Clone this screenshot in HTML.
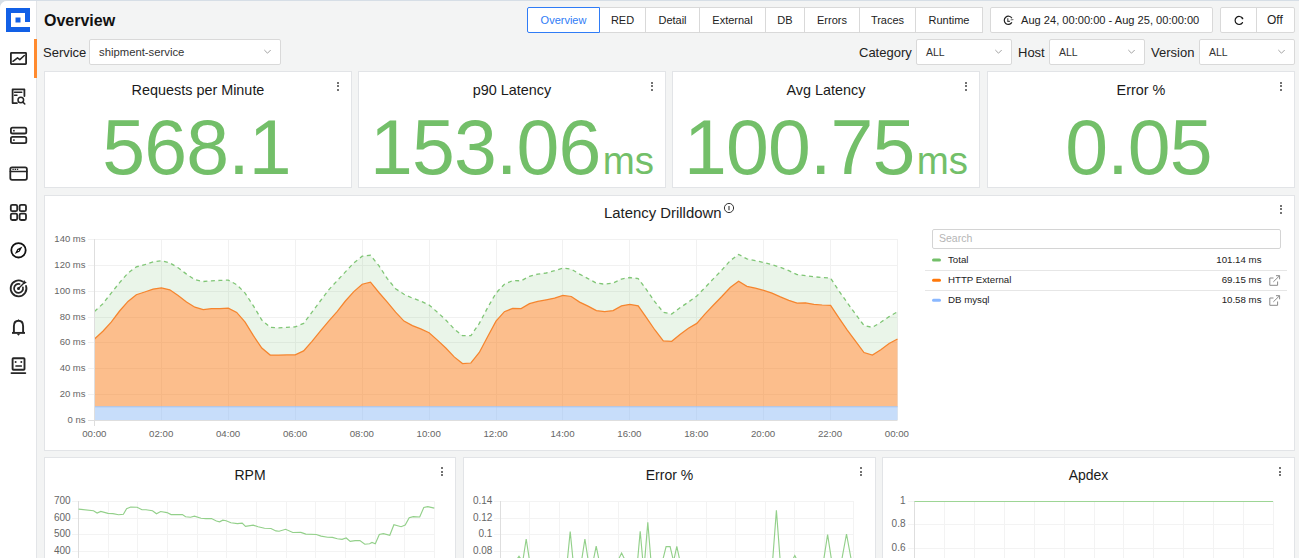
<!DOCTYPE html>
<html><head><meta charset="utf-8">
<style>
*{box-sizing:border-box;margin:0;padding:0}
html,body{width:1299px;height:558px;overflow:hidden;background:#d6dee6;font-family:"Liberation Sans",sans-serif;color:#1f1f1f}
.abs{position:absolute}
#app{position:absolute;left:0;top:1px;width:1299px;height:600px;background:#f3f4f4;border-top-left-radius:7px;overflow:hidden}
#side{position:absolute;left:0;top:0;width:37px;height:600px;background:#fff;border-right:1px solid #e3e5e8}
.t{position:absolute;white-space:nowrap;line-height:1}
.tabs{position:absolute;left:527px;top:6px;height:26px;display:flex}
.tab{height:26px;border:1px solid #d9d9d9;border-left:none;background:#fff;font-size:11px;display:flex;align-items:center;justify-content:center;color:#222}
.tab.active{border:1px solid #2f7cf6;color:#2f7cf6;border-radius:2px 0 0 2px}
.box{position:absolute;background:#fff;border:1px solid #d9d9d9;border-radius:2px}
.card{position:absolute;background:#fff;border:1px solid #e2e4e7}
.sel{position:absolute;background:#fff;border:1px solid #d9d9d9;border-radius:2px;top:38px;height:26px}
.sel span{position:absolute;left:9px;top:7px;font-size:10.5px;line-height:1;color:#333}
.chev{position:absolute;top:8px;width:7px;height:7px}
.lbl{position:absolute;top:45px;font-size:13px;line-height:1;color:#222}
.ctitle{position:absolute;left:0;width:100%;text-align:center;font-size:14.4px;line-height:1;color:#1a1a1a}
.big{position:absolute;left:0;width:100%;text-align:center;color:#73bf69;white-space:nowrap;line-height:1;letter-spacing:-0.8px}
.big b{font-weight:400;font-size:38.5px;margin-left:2.2px;letter-spacing:0}
.kebab{position:absolute;width:2px;height:9px}
.kebab i{position:absolute;left:0;width:2px;height:2px;background:#444;border-radius:1px}
</style></head><body>
<div id="app">
  <div id="side">
    <svg class="abs" style="left:0;top:0" width="37" height="400" viewBox="0 1 37 400">
      <!-- logo -->
      <path d="M6,8 H30 V22 H25 V13 H11 V27 H30 V32 H6 Z" fill="#1260e6"/>
      <rect x="15.5" y="17.5" width="5" height="5" fill="#1260e6"/>
      <g fill="none" stroke="#262626" stroke-width="1.8" stroke-linejoin="round" stroke-linecap="round">
        <!-- chart icon -->
        <rect x="10.9" y="52.9" width="15.2" height="11.2" rx="0.5"/>
        <path d="M13,61.3 L17.5,57.8 L19.8,59.6 L24.3,55.5" stroke-width="1.5"/>
        <!-- report icon -->
        <path d="M17,103.1 H12.6 V89.4 H24.4 V96"/>
        <path d="M14.5,92.3 H21.8" stroke-width="1.4"/>
        <path d="M14.5,95.2 H17" stroke-width="1.4"/>
        <circle cx="20.8" cy="100" r="2.8" stroke-width="1.5"/>
        <path d="M22.9,102.1 L24.8,104" stroke-width="1.5"/>
        <!-- server icon -->
        <rect x="10.9" y="127.7" width="15.4" height="5.8" rx="1.6"/>
        <rect x="10.9" y="136.9" width="15.4" height="6.2" rx="1.6"/>
        <!-- browser icon -->
        <rect x="10.3" y="167.3" width="16.6" height="12.6" rx="1.8"/>
        <path d="M10.3,171.5 H26.9" stroke-width="1.5"/>
        <!-- grid icon -->
        <rect x="10.8" y="204.8" width="6.4" height="6.4" rx="1.5"/>
        <rect x="19.6" y="204.8" width="6.4" height="6.4" rx="1.5"/>
        <rect x="10.8" y="213.6" width="6.4" height="6.4" rx="1.5"/>
        <rect x="19.6" y="213.6" width="6.4" height="6.4" rx="1.5"/>
        <!-- compass -->
        <circle cx="18.5" cy="250.3" r="7.2" stroke="#111"/>
        <!-- target -->
        <path d="M26.06,285.96 A7.9,7.9 0 1 1 22.5,281.56" stroke-width="1.8"/>
        <path d="M22.93,287.39 A4.5,4.5 0 1 1 19.56,284.02" stroke-width="1.7"/>
        <path d="M18.5,288.4 L24,282.9" stroke-width="1.4"/>
        <!-- bell -->
        <path d="M13.9,332.4 V326.2 C13.9,322.6 15.8,320.7 18.5,320.7 C21.2,320.7 23.1,322.6 23.1,326.2 V332.4" stroke-width="1.9"/>
        <path d="M12,332.9 H25" stroke-width="1.9" stroke-linecap="butt"/>
        <!-- robot -->
        <rect x="12.6" y="358.3" width="11.9" height="11.4" rx="0.8" stroke-width="1.9"/>
        <path d="M11.4,373.1 H25.4" stroke-width="1.7"/>
      </g>
      <g fill="#262626">
        <rect x="13.1" y="129.9" width="1.6" height="1.6"/>
        <rect x="13.1" y="139.3" width="1.6" height="1.6"/>
        <rect x="12.4" y="168.7" width="1.4" height="1.3"/>
        <rect x="14.6" y="168.7" width="1.4" height="1.3"/>
        <rect x="16.8" y="168.7" width="1.4" height="1.3"/>
        <path d="M14.8,254 L17.4,249 L22.4,246.4 L19.8,251.4 Z" fill="#111"/><circle cx="18.5" cy="250.3" r="0.6" fill="#fff"/>
        <path d="M16.7,333.8 H20.2 L18.45,335.7 Z"/>
        <path d="M18.5,319 L19.4,321 H17.6 Z"/>
        <path d="M22.8,282.3 L24.2,279.9 L25,281.6 L26.8,282.2 L24.6,284 Z"/>
        <circle cx="18.5" cy="288.4" r="1.5"/>
        <circle cx="15.6" cy="361.9" r="1"/>
        <circle cx="21.3" cy="361.9" r="1"/>
        <rect x="15.3" y="365.3" width="6.7" height="1.4" rx="0.5"/>
      </g>
    </svg>
  </div>
  <!-- orange indicator -->
  <div class="abs" style="left:34px;top:38px;width:3px;height:39px;background:#ff8a2e"></div>

  <!-- header -->
  <div class="t" style="left:44px;top:11.6px;font-size:16px;font-weight:700;color:#111">Overview</div>

  <div class="tabs">
    <div class="tab active" style="width:73px">Overview</div>
    <div class="tab" style="width:46px">RED</div>
    <div class="tab" style="width:54px">Detail</div>
    <div class="tab" style="width:66px">External</div>
    <div class="tab" style="width:39px">DB</div>
    <div class="tab" style="width:55px">Errors</div>
    <div class="tab" style="width:56px">Traces</div>
    <div class="tab" style="width:67px">Runtime</div>
  </div>

  <div class="box" style="left:990px;top:6px;width:223px;height:26px">
    <svg class="abs" style="left:11px;top:6.3px" width="14" height="14" viewBox="0 0 14 14">
      <path d="M9.9,4.2 A4.1,4.1 0 1 0 9.9,8.4" fill="none" stroke="#222" stroke-width="1.2"/>
      <path d="M5.8,4.2 V7.4 H7.9" fill="none" stroke="#444" stroke-width="1.1"/>
      <path d="M8.6,5.9 L11.4,5.6" stroke="#555" stroke-width="0.9"/>
    </svg>
    <div class="t" style="left:30px;top:6.8px;font-size:11.1px;color:#222">Aug 24, 00:00:00 - Aug 25, 00:00:00</div>
  </div>
  <div class="box" style="left:1220px;top:6px;width:75px;height:26px">
    <div class="abs" style="left:35px;top:0;width:1px;height:24px;background:#d9d9d9"></div>
    <svg class="abs" style="left:12px;top:6px" width="14" height="14" viewBox="0 0 14 14">
      <path d="M9.5,8.6 A4,4 0 1 1 9.4,4.2" fill="none" stroke="#1a1a1a" stroke-width="1.2" stroke-linecap="round"/>
      <circle cx="9.5" cy="4.4" r="0.85" fill="#1a1a1a"/>
    </svg>
    <div class="t" style="left:46px;top:6.4px;font-size:12px;color:#222">Off</div>
  </div>

  <!-- filter row -->
  <div class="lbl" style="left:43px;top:44.5px">Service</div>
  <div class="sel" style="left:89px;width:192px"><span style="font-size:11.3px">shipment-service</span>
    <svg class="chev" style="left:174px" viewBox="0 0 7 7"><path d="M0.3,2 L3.5,5.2 L6.7,2" fill="none" stroke="#999" stroke-width="0.9"/></svg></div>
  <div class="lbl" style="left:859px">Category</div>
  <div class="sel" style="left:916px;width:96px"><span>ALL</span>
    <svg class="chev" style="left:78px" viewBox="0 0 7 7"><path d="M0.3,2 L3.5,5.2 L6.7,2" fill="none" stroke="#999" stroke-width="0.9"/></svg></div>
  <div class="lbl" style="left:1018px">Host</div>
  <div class="sel" style="left:1049px;width:96px"><span>ALL</span>
    <svg class="chev" style="left:78px" viewBox="0 0 7 7"><path d="M0.3,2 L3.5,5.2 L6.7,2" fill="none" stroke="#999" stroke-width="0.9"/></svg></div>
  <div class="lbl" style="left:1151px">Version</div>
  <div class="sel" style="left:1199px;width:96px"><span>ALL</span>
    <svg class="chev" style="left:78px" viewBox="0 0 7 7"><path d="M0.3,2 L3.5,5.2 L6.7,2" fill="none" stroke="#999" stroke-width="0.9"/></svg></div>

  <!-- stat cards -->
  <div class="card" style="left:44px;top:70px;width:308px;height:117px">
    <div class="ctitle" style="top:11px">Requests per Minute</div>
    <div class="kebab" style="left:291.5px;top:9.6px"><i style="top:0"></i><i style="top:3.5px"></i><i style="top:7px"></i></div>
    <div class="big" style="top:37px;font-size:77px;left:-1.5px">568.1</div>
  </div>
  <div class="card" style="left:358px;top:70px;width:308px;height:117px">
    <div class="ctitle" style="top:11px">p90 Latency</div>
    <div class="kebab" style="left:291.5px;top:9.6px"><i style="top:0"></i><i style="top:3.5px"></i><i style="top:7px"></i></div>
    <div class="big" style="top:37px;font-size:77px">153.06<b>ms</b></div>
  </div>
  <div class="card" style="left:672px;top:70px;width:308px;height:117px">
    <div class="ctitle" style="top:11px">Avg Latency</div>
    <div class="kebab" style="left:291.5px;top:9.6px"><i style="top:0"></i><i style="top:3.5px"></i><i style="top:7px"></i></div>
    <div class="big" style="top:37px;font-size:77px">100.75<b>ms</b></div>
  </div>
  <div class="card" style="left:987px;top:70px;width:308px;height:117px">
    <div class="ctitle" style="top:11px">Error %</div>
    <div class="kebab" style="left:291.5px;top:9.6px"><i style="top:0"></i><i style="top:3.5px"></i><i style="top:7px"></i></div>
    <div class="big" style="top:37px;font-size:77px;left:-2.5px">0.05</div>
  </div>

  <!-- latency panel -->
  <div class="card" style="left:44px;top:194px;width:1251px;height:256px">
    <div class="t" style="left:559px;top:10.3px;font-size:14.9px;color:#222">Latency Drilldown</div>
    <svg class="abs" style="left:677.6px;top:5.8px" width="12" height="12" viewBox="0 0 12 12"><circle cx="6" cy="6" r="4.6" fill="none" stroke="#333" stroke-width="1"/><path d="M6,4 V8.2" stroke="#333" stroke-width="1.1"/></svg>
    <div class="kebab" style="left:1235px;top:8.6px"><i style="top:0"></i><i style="top:3.5px"></i><i style="top:7px"></i></div>
    <div class="abs" style="left:887px;top:33px;width:349px;height:19.5px;border:1px solid #d4d4d4;border-radius:2px;background:#fff"></div>
    <div class="t" style="left:894px;top:37px;font-size:10.5px;color:#b5b5b5">Search</div>
  </div>

  <!-- bottom panels -->
  <div class="card" style="left:44px;top:456px;width:412px;height:150px">
    <div class="ctitle" style="top:10px;font-size:14px">RPM</div>
    <div class="kebab" style="left:396px;top:9px"><i style="top:0"></i><i style="top:3.5px"></i><i style="top:7px"></i></div>
  </div>
  <div class="card" style="left:463px;top:456px;width:413px;height:150px">
    <div class="ctitle" style="top:10px;font-size:14px">Error %</div>
    <div class="kebab" style="left:396px;top:9px"><i style="top:0"></i><i style="top:3.5px"></i><i style="top:7px"></i></div>
  </div>
  <div class="card" style="left:882px;top:456px;width:413px;height:150px">
    <div class="ctitle" style="top:10px;font-size:14px">Apdex</div>
    <div class="kebab" style="left:396px;top:9px"><i style="top:0"></i><i style="top:3.5px"></i><i style="top:7px"></i></div>
  </div>
</div>

<!-- charts overlay in page coords -->
<svg class="abs" style="left:0;top:0;pointer-events:none" width="1299" height="558" viewBox="0 0 1299 558" font-family="Liberation Sans" >
  <!-- latency grid -->
  <path d="M88,239.5 H897.5 M88,265.5 H897.5 M88,291.5 H897.5 M88,317.5 H897.5 M88,342.5 H897.5 M88,368.5 H897.5 M88,394.5 H897.5 M161.5,239 V420 M228.5,239 V420 M295.5,239 V420 M362.5,239 V420 M429.5,239 V420 M496.5,239 V420 M562.5,239 V420 M629.5,239 V420 M696.5,239 V420 M763.5,239 V420 M830.5,239 V420 M897.5,239 V420" stroke="#f1f1f1" stroke-width="1" fill="none"/>
  <polygon points="94.5,311.5 102.9,303.7 111.2,293.1 119.6,282.6 128.0,273.0 136.3,266.9 144.7,264.7 153.1,261.8 161.4,260.7 169.8,262.9 178.1,267.8 186.5,274.1 194.9,279.7 203.2,281.5 211.6,280.8 220.0,280.4 228.3,280.1 236.7,284.7 245.1,293.1 253.4,305.9 261.8,320.0 270.2,327.4 278.5,327.8 286.9,327.4 295.2,326.9 303.6,323.4 312.0,312.2 320.3,301.0 328.7,289.8 337.1,280.8 345.4,271.9 353.8,262.9 362.2,256.2 370.5,255.3 378.9,265.7 387.3,278.6 395.6,288.7 404.0,294.3 412.4,298.1 420.7,301.0 429.1,305.0 437.4,312.2 445.8,320.0 454.2,328.9 462.5,335.7 470.9,335.7 479.3,323.4 487.6,307.7 496.0,293.1 504.4,284.2 512.7,280.6 521.1,280.8 529.5,276.3 537.8,274.1 546.2,273.0 554.6,270.7 562.9,268.1 571.3,269.2 579.6,274.1 588.0,278.6 596.4,283.1 604.7,284.2 613.1,283.1 621.5,279.0 629.8,277.5 638.2,278.6 646.6,289.8 654.9,301.9 663.3,312.2 671.7,314.0 680.0,307.7 688.4,302.1 696.8,296.0 705.1,287.5 713.5,278.6 721.8,270.1 730.2,260.7 738.6,254.4 746.9,258.9 755.3,260.7 763.7,262.5 772.0,264.7 780.4,267.4 788.8,270.7 797.1,274.6 805.5,275.7 813.9,276.8 822.2,277.5 830.6,278.1 838.9,290.9 847.3,302.8 855.7,314.4 864.0,325.6 872.4,327.4 880.8,322.2 889.1,316.6 897.5,311.7 897.5,339.0 889.1,343.5 880.8,349.8 872.4,355.1 864.0,352.5 855.7,341.3 847.3,330.1 838.9,317.8 830.6,305.4 822.2,305.0 813.9,304.3 805.5,302.8 797.1,303.0 788.8,300.3 780.4,296.9 772.0,293.1 763.7,290.4 755.3,288.2 746.9,286.4 738.6,281.3 730.2,287.5 721.8,296.5 713.5,305.0 705.1,313.9 696.8,323.4 688.4,328.3 680.0,334.5 671.7,341.3 663.3,340.8 654.9,330.0 646.6,317.8 638.2,305.9 629.8,304.3 621.5,305.9 613.1,310.6 604.7,311.7 596.4,310.6 588.0,306.1 579.6,302.1 571.3,296.5 562.9,295.4 554.6,298.1 546.2,299.8 537.8,301.4 529.5,303.7 521.1,308.6 512.7,308.4 504.4,311.7 496.0,321.1 487.6,336.8 479.3,352.5 470.9,363.0 462.5,363.6 454.2,356.9 445.8,348.0 437.4,340.1 429.1,332.8 420.7,328.9 412.4,325.6 404.0,321.1 395.6,312.2 387.3,302.1 378.9,292.5 370.5,282.2 362.2,284.2 353.8,291.6 345.4,301.0 337.1,311.7 328.7,321.1 320.3,331.2 312.0,341.3 303.6,350.9 295.2,354.9 286.9,354.9 278.5,355.1 270.2,355.1 261.8,348.0 253.4,335.7 245.1,322.2 236.7,312.4 228.3,308.1 220.0,308.6 211.6,308.6 203.2,309.5 194.9,307.2 186.5,302.1 178.1,295.4 169.8,289.8 161.4,288.0 153.1,289.1 144.7,292.0 136.3,294.7 128.0,301.4 119.6,311.0 111.2,322.2 102.9,331.2 94.5,339.0" fill="#73bf69" fill-opacity="0.15"/>
  <polygon points="94.5,339.0 102.9,331.2 111.2,322.2 119.6,311.0 128.0,301.4 136.3,294.7 144.7,292.0 153.1,289.1 161.4,288.0 169.8,289.8 178.1,295.4 186.5,302.1 194.9,307.2 203.2,309.5 211.6,308.6 220.0,308.6 228.3,308.1 236.7,312.4 245.1,322.2 253.4,335.7 261.8,348.0 270.2,355.1 278.5,355.1 286.9,354.9 295.2,354.9 303.6,350.9 312.0,341.3 320.3,331.2 328.7,321.1 337.1,311.7 345.4,301.0 353.8,291.6 362.2,284.2 370.5,282.2 378.9,292.5 387.3,302.1 395.6,312.2 404.0,321.1 412.4,325.6 420.7,328.9 429.1,332.8 437.4,340.1 445.8,348.0 454.2,356.9 462.5,363.6 470.9,363.0 479.3,352.5 487.6,336.8 496.0,321.1 504.4,311.7 512.7,308.4 521.1,308.6 529.5,303.7 537.8,301.4 546.2,299.8 554.6,298.1 562.9,295.4 571.3,296.5 579.6,302.1 588.0,306.1 596.4,310.6 604.7,311.7 613.1,310.6 621.5,305.9 629.8,304.3 638.2,305.9 646.6,317.8 654.9,330.0 663.3,340.8 671.7,341.3 680.0,334.5 688.4,328.3 696.8,323.4 705.1,313.9 713.5,305.0 721.8,296.5 730.2,287.5 738.6,281.3 746.9,286.4 755.3,288.2 763.7,290.4 772.0,293.1 780.4,296.9 788.8,300.3 797.1,303.0 805.5,302.8 813.9,304.3 822.2,305.0 830.6,305.4 838.9,317.8 847.3,330.1 855.7,341.3 864.0,352.5 872.4,355.1 880.8,349.8 889.1,343.5 897.5,339.0 897.5,406.8 94.5,406.8" fill="#f97d19" fill-opacity="0.5"/>
  <rect x="94.5" y="406.8" width="803" height="13.2" fill="#8fbbf5" fill-opacity="0.5"/>
  <polyline points="94.5,339.0 102.9,331.2 111.2,322.2 119.6,311.0 128.0,301.4 136.3,294.7 144.7,292.0 153.1,289.1 161.4,288.0 169.8,289.8 178.1,295.4 186.5,302.1 194.9,307.2 203.2,309.5 211.6,308.6 220.0,308.6 228.3,308.1 236.7,312.4 245.1,322.2 253.4,335.7 261.8,348.0 270.2,355.1 278.5,355.1 286.9,354.9 295.2,354.9 303.6,350.9 312.0,341.3 320.3,331.2 328.7,321.1 337.1,311.7 345.4,301.0 353.8,291.6 362.2,284.2 370.5,282.2 378.9,292.5 387.3,302.1 395.6,312.2 404.0,321.1 412.4,325.6 420.7,328.9 429.1,332.8 437.4,340.1 445.8,348.0 454.2,356.9 462.5,363.6 470.9,363.0 479.3,352.5 487.6,336.8 496.0,321.1 504.4,311.7 512.7,308.4 521.1,308.6 529.5,303.7 537.8,301.4 546.2,299.8 554.6,298.1 562.9,295.4 571.3,296.5 579.6,302.1 588.0,306.1 596.4,310.6 604.7,311.7 613.1,310.6 621.5,305.9 629.8,304.3 638.2,305.9 646.6,317.8 654.9,330.0 663.3,340.8 671.7,341.3 680.0,334.5 688.4,328.3 696.8,323.4 705.1,313.9 713.5,305.0 721.8,296.5 730.2,287.5 738.6,281.3 746.9,286.4 755.3,288.2 763.7,290.4 772.0,293.1 780.4,296.9 788.8,300.3 797.1,303.0 805.5,302.8 813.9,304.3 822.2,305.0 830.6,305.4 838.9,317.8 847.3,330.1 855.7,341.3 864.0,352.5 872.4,355.1 880.8,349.8 889.1,343.5 897.5,339.0" fill="none" stroke="#f5852e" stroke-width="1.25"/>
  <polyline points="94.5,311.5 102.9,303.7 111.2,293.1 119.6,282.6 128.0,273.0 136.3,266.9 144.7,264.7 153.1,261.8 161.4,260.7 169.8,262.9 178.1,267.8 186.5,274.1 194.9,279.7 203.2,281.5 211.6,280.8 220.0,280.4 228.3,280.1 236.7,284.7 245.1,293.1 253.4,305.9 261.8,320.0 270.2,327.4 278.5,327.8 286.9,327.4 295.2,326.9 303.6,323.4 312.0,312.2 320.3,301.0 328.7,289.8 337.1,280.8 345.4,271.9 353.8,262.9 362.2,256.2 370.5,255.3 378.9,265.7 387.3,278.6 395.6,288.7 404.0,294.3 412.4,298.1 420.7,301.0 429.1,305.0 437.4,312.2 445.8,320.0 454.2,328.9 462.5,335.7 470.9,335.7 479.3,323.4 487.6,307.7 496.0,293.1 504.4,284.2 512.7,280.6 521.1,280.8 529.5,276.3 537.8,274.1 546.2,273.0 554.6,270.7 562.9,268.1 571.3,269.2 579.6,274.1 588.0,278.6 596.4,283.1 604.7,284.2 613.1,283.1 621.5,279.0 629.8,277.5 638.2,278.6 646.6,289.8 654.9,301.9 663.3,312.2 671.7,314.0 680.0,307.7 688.4,302.1 696.8,296.0 705.1,287.5 713.5,278.6 721.8,270.1 730.2,260.7 738.6,254.4 746.9,258.9 755.3,260.7 763.7,262.5 772.0,264.7 780.4,267.4 788.8,270.7 797.1,274.6 805.5,275.7 813.9,276.8 822.2,277.5 830.6,278.1 838.9,290.9 847.3,302.8 855.7,314.4 864.0,325.6 872.4,327.4 880.8,322.2 889.1,316.6 897.5,311.7" fill="none" stroke="#80c676" stroke-width="1.3" stroke-dasharray="4,3.5"/>
  <path d="M94.5,406.8 H897.5" stroke="#9fc4f7" stroke-width="1"/>
  <path d="M94.5,239 V426 M88,420.5 H897.5" stroke="#dedede" stroke-width="1" fill="none"/>
  <g font-size="9.5" fill="#666" text-anchor="end">
    <text x="85.5" y="241.8">140 ms</text>
    <text x="85.5" y="267.8">120 ms</text>
    <text x="85.5" y="293.8">100 ms</text>
    <text x="85.5" y="319.8">80 ms</text>
    <text x="85.5" y="344.8">60 ms</text>
    <text x="85.5" y="370.8">40 ms</text>
    <text x="85.5" y="396.8">20 ms</text>
    <text x="85.5" y="422.8">0 ns</text>
  </g>
  <g font-size="9.7" fill="#666" text-anchor="middle">
    <text x="94.3" y="437">00:00</text>
    <text x="161.2" y="437">02:00</text>
    <text x="228.1" y="437">04:00</text>
    <text x="295" y="437">06:00</text>
    <text x="361.8" y="437">08:00</text>
    <text x="428.7" y="437">10:00</text>
    <text x="495.6" y="437">12:00</text>
    <text x="562.5" y="437">14:00</text>
    <text x="629.4" y="437">16:00</text>
    <text x="696.3" y="437">18:00</text>
    <text x="763.1" y="437">20:00</text>
    <text x="830" y="437">22:00</text>
    <text x="896.9" y="437">00:00</text>
  </g>
  <!-- legend -->
  <rect x="932" y="258.5" width="9" height="3" rx="1.5" fill="#73bf69"/>
  <rect x="932" y="278.7" width="9" height="3" rx="1.5" fill="#ff780a"/>
  <rect x="932" y="298.7" width="9" height="3" rx="1.5" fill="#8ab8ff"/>
  <path d="M925,270.5 H1287 M925,290.5 H1287" stroke="#e6e6e6" stroke-width="1"/>
  <g font-size="9.7" fill="#222">
    <text x="948" y="263.3">Total</text>
    <text x="948" y="283.3">HTTP External</text>
    <text x="948" y="303.3">DB mysql</text>
  </g>
  <g font-size="9.7" fill="#222" text-anchor="end">
    <text x="1261.5" y="263.3">101.14 ms</text>
    <text x="1261.5" y="283.3">69.15 ms</text>
    <text x="1261.5" y="303.3">10.58 ms</text>
  </g>
  <g fill="none" stroke="#8a8a8a" stroke-width="1">
    <path d="M1273.5,278 H1269.8 V285.3 H1277.6 V281.5"/>
    <path d="M1273.3,281.9 L1279.4,275.9 M1276,275.7 H1279.6 V279.3"/>
    <path d="M1273.5,298 H1269.8 V305.3 H1277.6 V301.5"/>
    <path d="M1273.3,301.9 L1279.4,295.9 M1276,295.7 H1279.6 V299.3"/>
  </g>

  <!-- RPM chart -->
  <path d="M72,501.5 H434.5 M72,518.5 H434.5 M72,534.5 H434.5 M72,551.5 H434.5 M108.5,501 V560 M137.5,501 V560 M167.5,501 V560 M197.5,501 V560 M226.5,501 V560 M256.5,501 V560 M286.5,501 V560 M315.5,501 V560 M345.5,501 V560 M375.5,501 V560 M404.5,501 V560 M434.5,501 V560 M494,501.5 H853.5 M494,518.5 H853.5 M494,534.5 H853.5 M494,551.5 H853.5 M529.5,501 V560 M559.5,501 V560 M588.5,501 V560 M618.5,501 V560 M647.5,501 V560 M676.5,501 V560 M706.5,501 V560 M735.5,501 V560 M765.5,501 V560 M794.5,501 V560 M824.5,501 V560 M853.5,501 V560 M908,501.5 H1273.5 M908,524.5 H1273.5 M908,548.5 H1273.5 M944.5,501 V560 M974.5,501 V560 M1004.5,501 V560 M1034.5,501 V560 M1064.5,501 V560 M1094.5,501 V560 M1123.5,501 V560 M1153.5,501 V560 M1183.5,501 V560 M1213.5,501 V560 M1243.5,501 V560 M1273.5,501 V560" stroke="#f3f3f3" stroke-width="1" fill="none"/>
  <path d="M78.5,501 V560 M500.5,501 V560 M914.5,501 V560" stroke="#dedede" stroke-width="1"/>
  <polyline points="78.6,509.1 93.5,510.7 97.1,513.0 100.8,511.4 108.0,513.4 112.9,513.6 118.6,514.7 123.4,514.2 126.6,508.6 130.7,507.0 137.1,507.3 142.0,509.7 146.0,509.7 152.5,510.7 156.5,513.8 160.6,511.5 167.0,512.6 171.1,514.6 182.4,514.6 185.6,516.7 190.5,517.2 194.5,516.2 201.0,518.3 205.8,518.6 211.5,518.5 216.4,521.0 219.6,521.8 222.8,520.2 226.1,520.7 230.9,522.7 237.4,523.6 242.2,523.1 245.5,526.4 253.2,525.2 258.1,526.7 264.5,528.3 271.0,528.5 275.9,530.9 279.1,531.2 285.6,529.3 292.8,532.5 300.9,532.4 305.8,534.1 316.3,534.5 321.1,536.1 327.6,537.2 332.4,537.4 337.3,538.8 342.1,539.3 346.2,538.0 350.2,541.4 355.1,540.6 359.9,540.6 364.8,544.2 369.6,543.8 372.0,542.5 375.3,543.8 379.3,534.5 383.4,533.6 389.8,535.3 393.9,524.8 401.1,526.7 405.2,525.1 409.2,517.8 413.3,516.7 419.7,517.0 423.8,507.5 427.8,506.7 434.3,508.1" fill="none" stroke="#93d08a" stroke-width="1.15"/>
  <path d="M512.9,565 L519.0,556.3 L525.1,565 M522.2,565 L526.2,539.0 L530.2,565 M566.9,565 L570.2,531.5 L573.5,565 M580.9,565 L584.9,539.0 L588.9,565 M592.4,565 L596.2,546.1 L600.0,565 M615.8,565 L621.6,553.0 L627.4,565 M637.2,565 L640.2,531.2 L643.2,565 M644.3,565 L647.8,522.3 L651.3,565 M672.8,565 L676.8,546.3 L680.8,565 M772.3,565 L776.4,510.2 L780.5,565 M790.2,565 L794.8,555.5 L799.4,565 M822.9,565 L827.6,534.5 L832.3,565 M840.8,565 L846.5,534.0 L852.2,565 M661.5,565 L666.1,546.6 L670.1,546.6 L674.5,565" fill="none" stroke="#93d08a" stroke-width="1.15"/>
  <path d="M914.5,501.5 H1273" stroke="#9dd595" stroke-width="1.2"/>
  <g font-size="10" fill="#666" text-anchor="end">
    <text x="70.6" y="504.2">700</text>
    <text x="70.6" y="521.2">600</text>
    <text x="70.6" y="537.2">500</text>
    <text x="70.6" y="554.2">400</text>
    <text x="492.4" y="504.2">0.14</text>
    <text x="492.4" y="521.2">0.12</text>
    <text x="492.4" y="537.2">0.1</text>
    <text x="492.4" y="554.2">0.08</text>
    <text x="905.5" y="504.2">1</text>
    <text x="905.5" y="527.2">0.8</text>
    <text x="905.5" y="551.2">0.6</text>
  </g>
</svg>
</body></html>
